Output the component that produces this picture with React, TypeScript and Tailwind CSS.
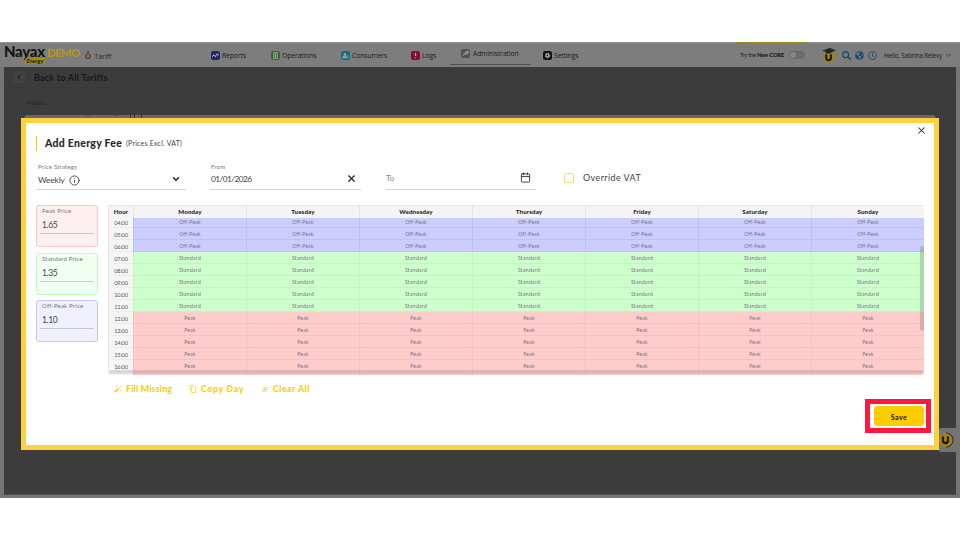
import React from 'react';
import { Calendar, ChevronDown, ChevronLeft, Info, X } from 'lucide-react';
import { MdAutoFixHigh, MdContentCopy } from 'react-icons/md';
import { FaGlobeAmericas, FaRegClock, FaSearch } from 'react-icons/fa';

const DAYS = ['Monday', 'Tuesday', 'Wednesday', 'Thursday', 'Friday', 'Saturday', 'Sunday'];

const ROWS = [
  { hour: '04:00', fee: 'Off-Peak' },
  { hour: '05:00', fee: 'Off-Peak' },
  { hour: '06:00', fee: 'Off-Peak' },
  { hour: '07:00', fee: 'Standard' },
  { hour: '08:00', fee: 'Standard' },
  { hour: '09:00', fee: 'Standard' },
  { hour: '10:00', fee: 'Standard' },
  { hour: '11:00', fee: 'Standard' },
  { hour: '12:00', fee: 'Peak' },
  { hour: '13:00', fee: 'Peak' },
  { hour: '14:00', fee: 'Peak' },
  { hour: '15:00', fee: 'Peak' },
  { hour: '16:00', fee: 'Peak' },
  { hour: '', fee: '' },
];

const FEE_STYLES: Record<string, string> = {
  'Off-Peak': 'bg-[#ccccff] border-[#bfbdff] tracking-[0.24px]',
  Standard: 'bg-[#ccffcc] border-[#bff8bf] tracking-[0.34px]',
  Peak: 'bg-[#ffcccc] border-[#ffbdbd] tracking-[0.25px]',
  '': 'bg-[#ffcccc] border-[#ffbdbd]',
};

const PRICES = [
  { label: 'Peak Price', value: '1.65', box: 'bg-[#fff0f0] border-[#ffc4c4]' },
  { label: 'Standard Price', value: '1.35', box: 'bg-[#f0fff0] border-[#bfffbf]' },
  { label: 'Off-Peak Price', value: '1.10', box: 'bg-[#f0f0ff] border-[#c4c4ff]' },
];

const NavIcon: React.FC<{ color: string; children: React.ReactNode }> = ({ color, children }) => (
  <svg viewBox="0 0 16 16" className="size-[9px] shrink-0" fill="none" stroke="#a3a3a3" strokeWidth="1.8">
    <rect width="16" height="16" rx="4" fill={color} stroke="none" />
    {children}
  </svg>
);

const TopBar: React.FC = () => (
  <header className="flex h-[25px] w-full shrink-0 border-t border-[#8e9492] bg-[#7d7d7d] text-[7px] leading-[9px] text-[#1b1b22]">
    <div className="flex w-[207px] pl-1">
      <div className="w-[41px]">
        <div className="text-[15px] leading-[16px] font-black tracking-[-0.3px] text-[#151515]">Nayax</div>
        <div className="-mt-[1px] ml-[21px] h-[6px] w-[20px] -skew-x-12 bg-[#a88c0c] text-center text-[5.5px] leading-[6px] font-black text-[#222]">
          Energy
        </div>
      </div>
      <div className="ml-[2px] w-[31px] pt-[3px] text-[11.5px] leading-[14px] font-bold tracking-[-0.75px] text-[#b8961a]">DEMO</div>
      <svg viewBox="0 0 10 14" className="mt-[8px] ml-[7px] h-[8px] w-[6px]" fill="#594a34">
        <path d="M3 0h4L6 3c3 2 4 4 4 7 0 3-2 4-5 4s-5-1-5-4c0-3 1-5 4-7Z" />
        <path d="M5 5v7M3 7h4M3 10h4" stroke="#a29c8c" />
      </svg>
      <div className="mt-[8px] ml-[3px] font-['Open_Sans','Noto_Sans',sans-serif] text-[8px] leading-[10px] tracking-[-0.4px] text-[#333]">Tariff</div>
    </div>

    <nav className="flex w-[530px] font-['Open_Sans','Noto_Sans',sans-serif] text-[6.8px] tracking-[-0.1px]">
      <div className="flex w-[60px] items-center gap-[2px] pl-1">
        <NavIcon color="#23236b"><path d="M2 10l3-3 3 3 3-5 3 3" /></NavIcon>Reports
      </div>
      <div className="flex w-[70px] items-center gap-[2px] pl-1">
        <NavIcon color="#326a35"><rect x="5" y="3" width="6" height="10" /><path d="M8 5v6" /></NavIcon>Operations
      </div>
      <div className="flex w-[70px] items-center gap-[2px] pl-1">
        <NavIcon color="#087078"><circle cx="7" cy="6" r="1.5" fill="#a3a3a3" /><path d="M3 12c1-4 5-4 7 0zM11 7l2 5" fill="#a3a3a3" /></NavIcon>Consumers
      </div>
      <div className="flex w-[43px] items-center gap-[2px] pl-1">
        <NavIcon color="#850d38"><path d="M8 3v6M8 11v2" strokeWidth="2.4" /></NavIcon>Logs
      </div>
      <div className="mb-[2px] flex w-[81px] items-center gap-[3px] border-b border-[#505050] pl-[11px]">
        <NavIcon color="#535353"><path d="M3 12l5-5M8 8l2 1 3-3-1-2-3 1z" /></NavIcon>Administration
      </div>
      <div className="ml-[8px] flex w-[80px] items-center gap-[2px] pl-1">
        <NavIcon color="#111"><circle cx="8" cy="8" r="3.2" strokeWidth="3" strokeDasharray="2.4 1" /><circle cx="8" cy="8" r="2.5" /></NavIcon>Settings
      </div>
    </nav>

    <div className="h-full w-[70px] pl-[3px]">
      <div className="-mt-[1px] -ml-[3px] h-[1px] bg-[#a18c20]" />
      <div className="mt-[7px] flex items-center">
        <span className="w-[49px] text-[5.4px] tracking-[-0.09px] whitespace-nowrap text-[#151515]">
          Try the <b className="font-black">New <span className="text-[6.3px]">C</span>ORE</b>
        </span>
        <span className="h-[8px] w-[16px] rounded-full border border-[#666] bg-[#6c6c6c]">
          <span className="block size-[6px] rounded-full bg-[#858585]" />
        </span>
      </div>
    </div>
    <div className="flex pt-[5px] pl-[15px]">
      <svg viewBox="0 0 32 32" className="h-[15px] w-[15px]">
        <circle cx="14" cy="20" r="11.5" fill="#a38706" />
        <path d="M9 14v7q0 5 5 5t5-5v-7" fill="none" stroke="#171717" strokeWidth="4.5" />
        <path d="M0 6L16 0l14 5-12 5 1 3q-6-4-11 0V8z" fill="#252525" />
        <path d="M28 6v14" stroke="#9b8616" strokeWidth="2" />
      </svg>
      <FaSearch className="mt-[3px] ml-[5px] size-[9px] text-[#174b6e]" />
      <FaGlobeAmericas className="mt-[3px] ml-[4px] size-[9px] text-[#174b6e]" />
      <FaRegClock className="mt-[3px] ml-[4px] size-[9px] text-[#244e6c]" />
      <span className="mt-[3px] ml-[7px] w-[61px] font-['Open_Sans','Noto_Sans',sans-serif] text-[6.4px] tracking-[-0.2px] whitespace-nowrap">Hello, Sabrina Relevy</span>
      <svg viewBox="0 0 8 6" className="mt-[6px] ml-[1px] h-[4px] w-[5px]" fill="none" stroke="#444"><path d="M0 1h8L4 5z" /></svg>
    </div>
  </header>
);

const Field: React.FC<{ label: string; value: React.ReactNode; icon: React.ReactNode; className: string }> = ({
  label,
  value,
  icon,
  className,
}) => (
  <div className={`flex h-[27px] flex-col border-b border-[#d6d6d6] ${className}`}>
    <div className="h-[8px] text-[6px] leading-[8px] tracking-[0.2px] text-[#777]">{label}</div>
    <div className="flex flex-1 items-center justify-between text-[8.4px] leading-[10px] text-[#444]">
      {value}
      {icon}
    </div>
  </div>
);

const FeeTable: React.FC = () => (
  <div className="relative h-[170px] w-[816px] overflow-hidden rounded-[2px] border-l border-[#e4e4e4]">
    <div className="flex h-[13px] border-t border-[#e6e6e6] bg-[#f4f4f4] text-center text-[6.2px] leading-[12px] font-black text-[#292929]">
      <div className="w-[24px] shrink-0 tracking-[0.1px]">Hour</div>
      {DAYS.map(day => (
        <div key={day} className="w-[113px] shrink-0 border-l border-[#e5e5e5] tracking-[0.1px]">{day}</div>
      ))}
    </div>
    <div className="h-[157px] overflow-hidden">
      <div className="-mt-[2px]">
        {ROWS.map(row => (
          <div key={row.hour} className="flex h-[12px] text-center">
            <div className="w-[24px] shrink-0 border-b border-[#ebebeb] bg-[#f5f5f5] text-[5.6px] leading-[13px] tracking-[-0.2px] text-[#555]">{row.hour}</div>
            {DAYS.map(day => (
              <div
                key={day}
                className={`w-[113px] shrink-0 border-b border-l text-[5px] leading-[13px] text-[#74717c] ${FEE_STYLES[row.fee]}`}
              >
                {row.fee}
              </div>
            ))}
          </div>
        ))}
      </div>
    </div>
    <div className="absolute top-[41px] right-0 h-[85px] w-[4px] rounded-full bg-black/15" />
    <div className="absolute right-[1px] bottom-[1px] left-0 h-[4px] rounded-full bg-black/10" />
  </div>
);

const FeeModal: React.FC = () => (
  <div className="absolute top-[118px] left-[21px] h-[332px] w-[918px] border-[5px] border-[#ffd03f] bg-white px-[10px] pt-[13px]">
    <div className="flex h-[15px] items-center border-l border-[#ffc800] pl-[8px]">
      <h1 className="w-[81px] text-[10.5px] leading-[13px] font-black tracking-[0.27px] whitespace-nowrap text-[#292929]">Add Energy Fee</h1>
      <span className="text-[7px] tracking-[0.22px] text-[#444]">(Prices Excl. VAT)</span>
      <X className="-mt-[26px] mr-[-3px] ml-auto size-[11px] text-[#333]" strokeWidth={2.3} />
    </div>

    <div className="mt-[12px] flex h-[27px]">
      <Field
        className="w-[150px] pl-[2px]"
        label="Price Strategy"
        value={<span className="flex items-center gap-[4px] tracking-[-0.15px]">Weekly <Info className="size-[11px]" strokeWidth={2} /></span>}
        icon={<ChevronDown className="-mt-[2px] mr-[5px] size-[10px] text-[#222]" strokeWidth={3.5} />}
      />
      <Field
        className="ml-[24px] w-[151px] pl-[1px]"
        label="From"
        value={<span className="-mt-[2px] tracking-[-0.6px]">01/01/2026</span>}
        icon={<X className="-mt-[4px] mr-[4px] size-[11px] text-[#222]" strokeWidth={2.5} />}
      />
      <Field
        className="ml-[25px] w-[150px]"
        label=""
        value={<span className="-mt-[5px] text-[8px] text-[#888]">To</span>}
        icon={<Calendar className="-mt-[5px] mr-[5px] size-[11px] text-[#333]" strokeWidth={2} />}
      />
      <label className="ml-[28px] flex h-[30px] items-center">
        <span className="size-[10px] rounded-[2px] border border-[#ffdb68]" />
        <span className="ml-[9px] text-[9px] tracking-[0.4px] text-[#444]">Override VAT</span>
      </label>
    </div>

    <div className="mt-[15px] flex gap-[10px]">
      <div className="flex w-[62px] flex-col gap-[5.5px]">
        {PRICES.map(price => (
          <div key={price.label} className={`h-[42px] rounded-[3px] border px-[3px] ${price.box}`}>
            <div className="pt-[1px] pl-[2px] text-[6px] leading-[8px] tracking-[0.2px] whitespace-nowrap text-[#777]">{price.label}</div>
            <div className="h-[19px] border-b border-[#c6c6cd] pt-[4px] pl-[2px] text-[8.5px] leading-[12px] tracking-[-0.4px] text-[#444]">{price.value}</div>
          </div>
        ))}
      </div>
      <FeeTable />
    </div>

    <div className="mt-[9px] flex h-[10px] items-center pl-[78px] text-[8.8px] leading-[10px] font-black text-[#ffcf08]">
      <button className="flex w-[75px] items-center gap-[4px] tracking-[0.17px] whitespace-nowrap"><MdAutoFixHigh className="size-[8px]" />Fill Missing</button>
      <button className="flex w-[72px] items-center gap-[4px] tracking-[0.65px] whitespace-nowrap"><MdContentCopy className="size-[8px]" />Copy Day</button>
      <button className="flex items-center gap-[4px] tracking-[0.45px] whitespace-nowrap">
        <svg viewBox="0 0 16 12" className="h-[5px] w-[8px]" fill="none" stroke="currentColor" strokeWidth="2.2">
          <path d="M5 2h10M3 6h10M1 10h10" />
        </svg>
        Clear All
      </button>
    </div>

    <div className="mt-[5px] mr-[-7px] ml-auto flex h-[34px] w-[66px] border-[5px] border-[#ff173f] pt-[2px] pl-[4px]">
      <button className="h-[20px] w-[50px] rounded-[3px] bg-[#ffcc00] text-[7px] leading-[22px] font-black tracking-[0.4px] text-[#292400]">Save</button>
    </div>
  </div>
);

const App: React.FC = () => (
  <div className="relative h-[540px] w-[960px] overflow-hidden bg-white pt-[42px] font-['Lato',sans-serif]">
    <div className="flex h-[456px] flex-col bg-[#747474]">
      <TopBar />
      <main className="mx-1 h-[428px] border-b border-[#4c4c4c] bg-[#3c3c3c]">
        <div className="flex h-[21px] items-center border-b border-[#393939] pl-[9px]">
          <span className="flex size-[12px] items-center justify-center rounded-[2px] bg-[#414141]">
            <ChevronLeft className="size-[8px] text-[#111]" strokeWidth={3} />
          </span>
          <span className="mt-[1px] ml-[9px] text-[9px] font-bold tracking-[0.2px] text-[#171717]">Back to All Tariffs</span>
        </div>
        <div className="mt-[10px] ml-[23px] text-[6.5px] leading-[10px] tracking-[0.3px] text-[#1f1f1f]">Public</div>
        {/* top edge of the tariff card, mostly hidden by the modal */}
        <div className="mt-[7px] ml-[20px] flex h-[10px] w-[912px] rounded-t-[4px] bg-[#686868] pl-[62px]">
          <span className="h-[4px] w-[4px] border-t border-[#555]" />
          <span className="ml-[24px] h-[4px] w-[4px] border-t border-[#555]" />
          <span className="ml-[12px] h-[4px] w-[1px] bg-[#333]" />
          <span className="ml-[3px] h-[4px] w-[1px] bg-[#333]" />
          <span className="ml-[6px] h-[4px] w-[1px] bg-[#333]" />
        </div>
      </main>
    </div>

    <div className="absolute top-[428px] right-0 flex h-[24px] w-[22px] items-center rounded-l-[4px] bg-[#747474]">
      <svg viewBox="0 0 32 32" className="size-[16px]">
        <circle cx="15" cy="16" r="13.5" fill="#a18508" />
        <path d="M16 2c8 0 14 6 14 14s-6 14-14 14" fill="none" stroke="#252525" strokeWidth="2" />
        <path d="M10 9v8q0 5 5 5t5-5V9" fill="none" stroke="#191919" strokeWidth="4.5" />
      </svg>
    </div>

    <FeeModal />
  </div>
);

export default App;
